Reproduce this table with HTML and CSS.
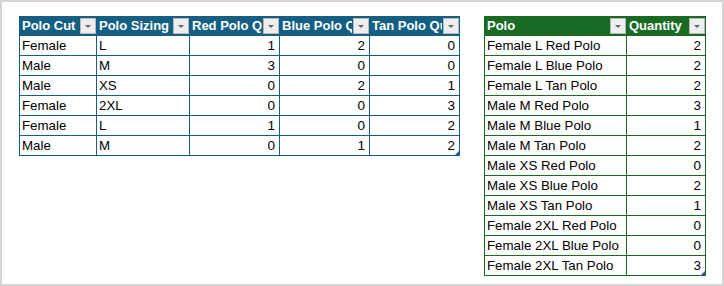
FILE: index.html
```html
<!DOCTYPE html>
<html>
<head>
<meta charset="utf-8">
<link rel="stylesheet" href="styles.css">
</head>
<body>
<div class="frame">
  <div class="tbl tbl-blue cols-left">
    <div class="hd"><span class="ht">Polo Cut</span><span class="dd"></span></div>
    <div class="hd"><span class="ht">Polo Sizing</span><span class="dd"></span></div>
    <div class="hd"><span class="ht">Red Polo Quantity</span><span class="dd"></span></div>
    <div class="hd"><span class="ht">Blue Polo Quantity</span><span class="dd"></span></div>
    <div class="hd"><span class="ht">Tan Polo Quantity</span><span class="dd"></span></div>

    <div class="c">Female</div><div class="c">L</div><div class="c n">1</div><div class="c n">2</div><div class="c n">0</div>
    <div class="c">Male</div><div class="c">M</div><div class="c n">3</div><div class="c n">0</div><div class="c n">0</div>
    <div class="c">Male</div><div class="c">XS</div><div class="c n">0</div><div class="c n">2</div><div class="c n">1</div>
    <div class="c">Female</div><div class="c">2XL</div><div class="c n">0</div><div class="c n">0</div><div class="c n">3</div>
    <div class="c">Female</div><div class="c">L</div><div class="c n">1</div><div class="c n">0</div><div class="c n">2</div>
    <div class="c">Male</div><div class="c">M</div><div class="c n">0</div><div class="c n">1</div><div class="c n last">2</div>
  </div>

  <div class="tbl tbl-green cols-right">
    <div class="hd"><span class="ht">Polo</span><span class="dd"></span></div>
    <div class="hd"><span class="ht">Quantity</span><span class="dd"></span></div>

    <div class="c">Female L Red Polo</div><div class="c n">2</div>
    <div class="c">Female L Blue Polo</div><div class="c n">2</div>
    <div class="c">Female L Tan Polo</div><div class="c n">2</div>
    <div class="c">Male M Red Polo</div><div class="c n">3</div>
    <div class="c">Male M Blue Polo</div><div class="c n">1</div>
    <div class="c">Male M Tan Polo</div><div class="c n">2</div>
    <div class="c">Male XS Red Polo</div><div class="c n">0</div>
    <div class="c">Male XS Blue Polo</div><div class="c n">2</div>
    <div class="c">Male XS Tan Polo</div><div class="c n">1</div>
    <div class="c">Female 2XL Red Polo</div><div class="c n">0</div>
    <div class="c">Female 2XL Blue Polo</div><div class="c n">0</div>
    <div class="c">Female 2XL Tan Polo</div><div class="c n last">3</div>
  </div>
</div>
</body>
</html>
```

FILE: styles.css
```css
html, body {
  margin: 0;
  padding: 0;
  background: #ffffff;
}

.frame {
  box-sizing: border-box;
  width: 724px;
  height: 286px;
  border: 2px solid #d4d4d4;
  padding: 14px 0 0 17px;
  display: flex;
  align-items: flex-start;
  gap: 24px;
  font-family: "Liberation Sans", Arial, sans-serif;
  color: #000;
}

.tbl {
  display: grid;
  grid-auto-rows: 20px;
  border-left: 1px solid var(--line);
}

.tbl-blue { --line: #156082; }
.tbl-green { --line: #196B24; }

.cols-left { grid-template-columns: 77px 93px 90px 90px 90px; }
.cols-right { grid-template-columns: 142px 79px; }

.hd {
  box-sizing: border-box;
  background: var(--line);
  color: #fff;
  font-weight: bold;
  font-size: 13px;
  display: flex;
  align-items: center;
  padding: 0 1px 0 2px;
  min-width: 0;
}

.ht {
  flex: 1 1 auto;
  min-width: 0;
  overflow: hidden;
  white-space: nowrap;
  line-height: 20px;
}

.dd {
  flex: none;
  width: 14px;
  height: 14px;
  margin-left: 1px;
  background: #eeeeee;
  border: 1px solid #b8b8b8;
  position: relative;
}
.dd::after {
  content: "";
  position: absolute;
  left: 4px;
  top: 6px;
  border-left: 3px solid transparent;
  border-right: 3px solid transparent;
  border-top: 3px solid #666666;
}

.c {
  box-sizing: border-box;
  border-right: 1px solid var(--line);
  border-bottom: 1px solid var(--line);
  font-size: 13.3px;
  line-height: 20px;
  padding: 0 3px 0 2px;
  white-space: nowrap;
  overflow: hidden;
}

.n {
  text-align: right;
  padding-right: 4px;
  font-size: 13.5px;
  font-family: Arial, "Liberation Sans", sans-serif;
}

.last { position: relative; }
.last::after {
  content: "";
  position: absolute;
  right: 0;
  bottom: 0;
  border-left: 4px solid transparent;
  border-bottom: 4px solid #3a4a9c;
}
```
